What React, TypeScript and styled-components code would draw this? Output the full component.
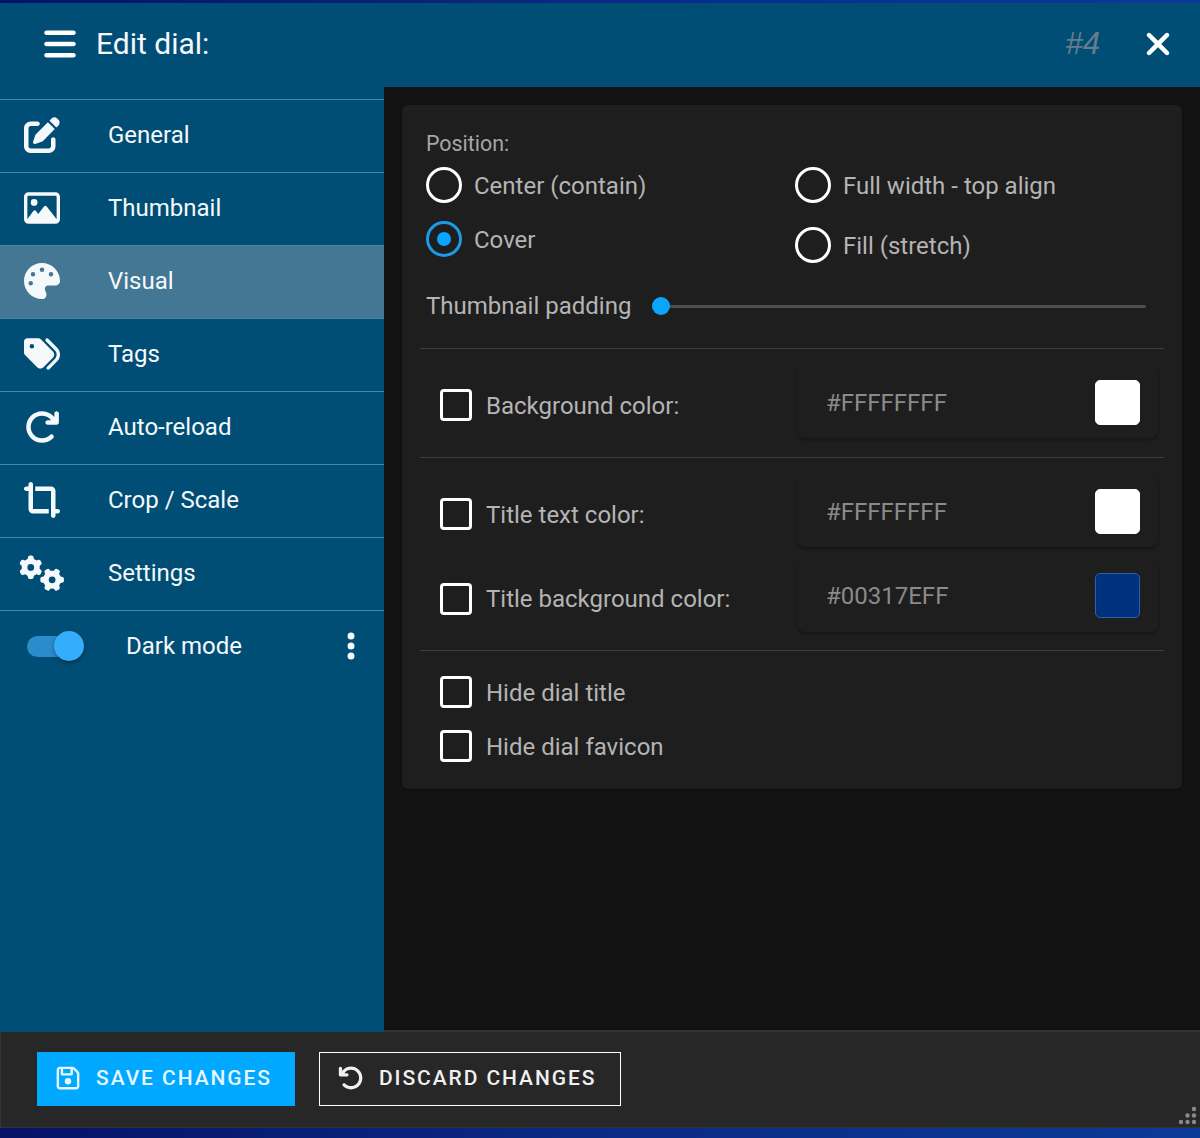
import React from "react";
import styled, { createGlobalStyle } from "styled-components";
import { FaBars, FaXmark, FaPenToSquare, FaRegImage, FaPalette, FaTags, FaArrowRotateRight, FaCropSimple, FaGears, FaRegFloppyDisk, FaArrowRotateLeft, FaEllipsisVertical } from "react-icons/fa6";

const Global = createGlobalStyle`
  html, body { margin: 0; padding: 0; background: #0a1f6e; }
  * { box-sizing: border-box; }
  body { font-family: Roboto, "Liberation Sans", sans-serif; }
`;

const Page = styled.div`
  width: 1200px; height: 1138px; display: flex; flex-direction: column; overflow: hidden;
`;
const Strip = styled.div<{ $h: number }>`
  height: ${p => p.$h}px; flex: none;
  background: linear-gradient(90deg, #061266 0%, #0a2a86 50%, #0b3a96 100%);
`;
const Header = styled.header`
  height: 84px; flex: none; background: #004e75; display: flex; align-items: center; padding: 0 28px 2px 44px; color: #fff;
`;
const MenuBtn = styled.span`
  display: flex; margin-right: 20px;
  svg { width: 32px; height: 36px; }
`;
const Title = styled.h1`
  margin: 0; font-size: 30px; font-weight: 400; color: #f5f9fb; flex: 1; line-height: 36px;
`;
const DialId = styled.span`
  font-family: "Liberation Sans", Arial, sans-serif; font-style: italic; font-size: 31px; color: #687d8c; margin-right: 44px;
`;
const CloseBtn = styled.span`
  display: flex; svg { width: 28px; height: 36px; }
`;
const Body = styled.div`
  flex: 1; display: flex; min-height: 0; background: #333;
`;
const Sidebar = styled.nav`
  width: 384px; flex: none; background: #004e75; padding-top: 12px;
`;
const NavItem = styled.div<{ $active?: boolean }>`
  height: 73px; display: flex; align-items: center; color: #f5f9fb; font-size: 24px; padding-bottom: 2px;
  border-top: 1px solid #4a86a8;
  background: ${p => (p.$active ? "#437794" : "transparent")};
`;
const NavIcon = styled.span<{ $w?: number }>`
  width: 108px; flex: none; display: flex; justify-content: center; padding-right: 24px;
  svg { width: ${p => p.$w ?? 36}px; height: 36px; flex: none; }
`;
const ToggleRow = styled.div`
  height: 73px; display: flex; align-items: center; color: #f5f9fb; font-size: 24px; padding-bottom: 2px;
  border-top: 1px solid #4a86a8; padding-left: 27px;
`;
const Switch = styled.span`
  position: relative; width: 54px; height: 21px; border-radius: 11px; background: #2a8ccb; margin-right: 45px; flex: none;
  &::after {
    content: ""; position: absolute; left: 27px; top: -5px; width: 30px; height: 30px; border-radius: 50%;
    background: #33adfc; box-shadow: 0 2px 4px rgba(0,0,0,.35);
  }
`;
const ToggleLabel = styled.span`flex: 1;`;
const More = styled.span`
  display: flex; width: 10px; margin-right: 28px; justify-content: center;
  svg { width: 30px; height: 32px; flex: none; }
`;
const Main = styled.main`
  flex: 1; background: #121212; padding: 18px 18px 0 18px; margin-bottom: 2px;
`;
const Card = styled.section`
  background: #1e1e1e; border-radius: 6px; height: 684px; padding: 27px 18px 0 18px;
  box-shadow: 0 1px 2px rgba(0,0,0,.4); color: #b4b4b4;
`;
const SmallLabel = styled.div`
  font-size: 21.4px; line-height: 24px; padding-left: 6px; color: #a6a6a6; height: 24px;
`;
const RadioGrid = styled.div`
  display: grid; grid-template-columns: 369px 1fr; padding-left: 6px; margin-top: 11px;
`;
const RadioCol = styled.div<{ $gap: number }>`
  display: flex; flex-direction: column; gap: ${p => p.$gap}px;
`;
const RadioRow = styled.label`
  display: flex; align-items: center; height: 36px; gap: 12px; font-size: 24px; color: #b4b4b4;
`;
const RowText = styled.span<{ $flat?: boolean }>`
  padding-top: ${p => (p.$flat ? 0 : 2)}px;
`;
const RadioMark = styled.span<{ $on?: boolean }>`
  width: 36px; height: 36px; border-radius: 50%; flex: none; position: relative;
  border: 3.5px solid ${p => (p.$on ? "#1a9be6" : "#fff")};
  ${p => p.$on && `&::after { content: ""; position: absolute; left: 7.5px; top: 7.5px; width: 14px; height: 14px; border-radius: 50%; background: #0aa5ff; }`}
`;
const SliderRow = styled.div`
  display: flex; align-items: center; padding-left: 6px; margin-top: 19px; height: 48px; font-size: 24px;
`;
const SliderTrack = styled.span`
  position: relative; width: 494px; height: 3px; background: #4e4e4e; margin-left: 21px; border-radius: 2px;
`;
const SliderThumb = styled.span`
  position: absolute; left: 0; top: -8px; width: 18px; height: 18px; border-radius: 50%; background: #0aa5ff;
`;
const Divider = styled.hr<{ $top: number }>`
  border: 0; border-top: 1px solid #3f3f3f; margin: ${p => p.$top}px 0 0 0; height: 0;
`;
const ColorRow = styled.div<{ $top: number }>`
  display: flex; align-items: center; justify-content: space-between; height: 72px; margin-top: ${p => p.$top}px; padding: 0 6px 0 20px;
`;
const Check = styled.label`
  display: flex; align-items: center; gap: 14px; font-size: 24px; color: #b4b4b4; height: 32px;
  position: relative; top: 3px;
`;
const HideRow = styled.label<{ $top: number }>`
  display: flex; align-items: center; gap: 14px; font-size: 24px; color: #b4b4b4; height: 32px;
  margin: ${p => p.$top}px 0 0 20px;
`;
const CheckMark = styled.span<{ $lift?: boolean }>`
  width: 32px; height: 32px; border: 3.5px solid #fff; border-radius: 4px; flex: none;
  ${p => p.$lift && "margin-top: -2px;"}
`;
const ColorInput = styled.div`
  width: 361px; height: 72px; border-radius: 8px; background: #1e1e1e; display: flex; align-items: center; justify-content: space-between;
  padding: 0 18px 0 30px; font-size: 24px; color: #8a8a8a;
  box-shadow: 0 2px 3px rgba(0,0,0,.3);
`;
const InputText = styled.span<{ $dy: number }>`position: relative; top: ${p => p.$dy}px; left: -1px;`;
const Swatch = styled.span<{ $c: string; $b?: string; $dy: number }>`
  width: 45px; height: 45px; border-radius: 5px; background: ${p => p.$c}; flex: none; position: relative; top: ${p => p.$dy}px;
  border: 1px solid ${p => p.$b ?? p.$c};
`;
const Footer = styled.footer`
  height: 96px; flex: none; background: #272727; display: flex; align-items: center; gap: 24px; padding: 0 0 1px 36px; position: relative;
  border-left: 1px solid #333; border-bottom: 1px solid #333;
`;
const Button = styled.button<{ $primary?: boolean }>`
  height: 54px; display: flex; align-items: center; border-radius: 0; font-family: Roboto, sans-serif; font-size: 21px; font-weight: 500; letter-spacing: 1.92px;
  color: ${p => (p.$primary ? "#e6f6ff" : "#f0f0f0")};
  background: ${p => (p.$primary ? "#00a8ff" : "transparent")};
  border: ${p => (p.$primary ? "0" : "1px solid #fff")};
  padding: 0 ${p => (p.$primary ? 23 : 24)}px 2px 18px;
  gap: 15px;
  svg { width: 26px; height: 26px; flex: none; }
`;
const Grip = styled.svg`
  position: absolute; right: 2px; bottom: 2px; width: 20px; height: 20px; fill: #8a8a8a;
`;

const nav = [
  { label: "General", Icon: FaPenToSquare },
  { label: "Thumbnail", Icon: FaRegImage },
  { label: "Visual", Icon: FaPalette, active: true },
  { label: "Tags", Icon: FaTags },
  { label: "Auto-reload", Icon: FaArrowRotateRight },
  { label: "Crop / Scale", Icon: FaCropSimple },
  { label: "Settings", Icon: FaGears, w: 46 },
];

export default function App() {
  return (
    <Page>
      <Global />
      <Strip $h={3} />
      <Header>
        <MenuBtn><FaBars /></MenuBtn>
        <Title>Edit dial:</Title>
        <DialId>#4</DialId>
        <CloseBtn><FaXmark /></CloseBtn>
      </Header>
      <Body>
        <Sidebar>
          {nav.map(({ label, Icon, active, w }) => (
            <NavItem key={label} $active={active}>
              <NavIcon $w={w}><Icon /></NavIcon>
              {label}
            </NavItem>
          ))}
          <ToggleRow>
            <Switch />
            <ToggleLabel>Dark mode</ToggleLabel>
            <More><FaEllipsisVertical /></More>
          </ToggleRow>
        </Sidebar>
        <Main>
          <Card>
            <SmallLabel>Position:</SmallLabel>
            <RadioGrid>
              <RadioCol $gap={18}>
                <RadioRow><RadioMark /><RowText>Center (contain)</RowText></RadioRow>
                <RadioRow><RadioMark $on /><RowText>Cover</RowText></RadioRow>
              </RadioCol>
              <RadioCol $gap={24}>
                <RadioRow><RadioMark /><RowText>Full width - top align</RowText></RadioRow>
                <RadioRow><RadioMark /><RowText>Fill (stretch)</RowText></RadioRow>
              </RadioCol>
            </RadioGrid>
            <SliderRow>
              Thumbnail padding
              <SliderTrack><SliderThumb /></SliderTrack>
            </SliderRow>
            <Divider $top={18} />
            <ColorRow $top={17}>
              <Check><CheckMark /><RowText>Background color:</RowText></Check>
              <ColorInput><InputText $dy={1}>#FFFFFFFF</InputText><Swatch $c="#fff" $dy={0} /></ColorInput>
            </ColorRow>
            <Divider $top={19} />
            <ColorRow $top={17}>
              <Check><CheckMark /><RowText>Title text color:</RowText></Check>
              <ColorInput><InputText $dy={1}>#FFFFFFFF</InputText><Swatch $c="#fff" $dy={0} /></ColorInput>
            </ColorRow>
            <ColorRow $top={13}>
              <Check><CheckMark /><RowText $flat>Title background color:</RowText></Check>
              <ColorInput><InputText $dy={0}>#00317EFF</InputText><Swatch $c="#00317e" $b="#2f5fa8" $dy={-1} /></ColorInput>
            </ColorRow>
            <Divider $top={18} />
            <HideRow $top={26}><CheckMark $lift />Hide dial title</HideRow>
            <HideRow $top={22}><CheckMark $lift />Hide dial favicon</HideRow>
          </Card>
        </Main>
      </Body>
      <Footer>
        <Button $primary><FaRegFloppyDisk />SAVE CHANGES</Button>
        <Button><FaArrowRotateLeft />DISCARD CHANGES</Button>
        <Grip viewBox="0 0 20 20">
          <circle cx="16" cy="4" r="2.2" /><circle cx="9.5" cy="10.5" r="2.2" /><circle cx="16" cy="10.5" r="2.2" />
          <circle cx="3" cy="17" r="2.2" /><circle cx="9.5" cy="17" r="2.2" /><circle cx="16" cy="17" r="2.2" />
        </Grip>
      </Footer>
      <Strip $h={10} />
    </Page>
  );
}
